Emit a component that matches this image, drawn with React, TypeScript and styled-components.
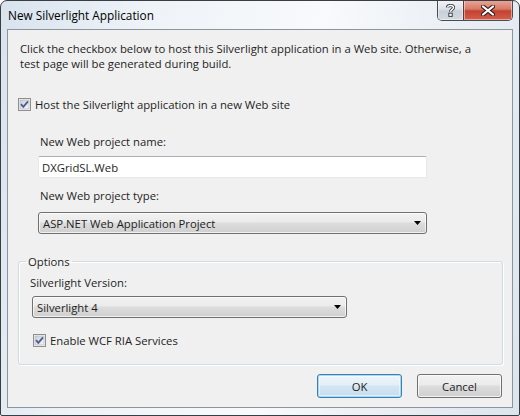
import React from "react"
import styled, { createGlobalStyle } from "styled-components"

const GlobalStyle = createGlobalStyle`
  html, body {
    margin: 0;
    padding: 0;
    background: #ffffff;
  }
  body {
    font-family: "Open Sans", "Liberation Sans", sans-serif;
    font-size: 11.3px;
    color: #1e1e1e;
  }
`

const Window = styled.div`
  width: 520px;
  height: 416px;
  box-sizing: border-box;
  display: flex;
  flex-direction: column;
  border: 1px solid #3a3d42;
  border-radius: 7px 7px 2px 2px;
  background: linear-gradient(100deg, #d8e3ee 0%, #eef3f8 25%, #f8fafc 55%, #e9eef4 80%, #dce5ee 100%);
  overflow: hidden;
`

const TitleBar = styled.div`
  height: 28px;
  display: flex;
  justify-content: space-between;
  align-items: flex-start;
`

const Title = styled.div`
  padding: 7px 0 0 7px;
  font-size: 11.8px;
  line-height: 15px;
  color: #000;
`

const Caption = styled.div`
  display: flex;
  margin-right: 6px;
  margin-top: -1px;
  border: 1px solid #474b52;
  border-top: none;
  border-radius: 0 0 5px 5px;
  overflow: hidden;
  height: 20px;
`

const CaptionButton = styled.div<{ $close?: boolean }>`
  width: ${(p) => (p.$close ? "48px" : "25px")};
  display: flex;
  align-items: center;
  justify-content: center;
  border-left: ${(p) => (p.$close ? "1px solid #5a3a38" : "none")};
  background: ${(p) =>
    p.$close
      ? "linear-gradient(#e9a99c 0%, #d87a68 45%, #c4412f 55%, #d2604c 100%)"
      : "linear-gradient(#f2f4f7 0%, #dde2e8 45%, #c9d0d8 55%, #d3d9e0 100%)"};
  box-shadow: inset 0 0 0 1px rgba(255, 255, 255, 0.45);
`

const Client = styled.div`
  flex: 1;
  margin: 0 6px 7px 6px;
  border: 1px solid #8d949c;
  background: #f0f0f0;
  display: flex;
  flex-direction: column;
  padding: 0 9px 0 10px;
`

const Intro = styled.p`
  margin: 11px 0 0 2px;
  max-width: 472px;
  line-height: 15px;
`

const CheckRow = styled.label<{ $top: number; $left?: number }>`
  display: flex;
  align-items: center;
  gap: 4px;
  height: 15px;
  margin-top: ${(p) => p.$top}px;
  margin-left: ${(p) => p.$left ?? 0}px;
`

const FieldLabel = styled.div<{ $top: number; $left: number }>`
  line-height: 15px;
  margin-top: ${(p) => p.$top}px;
  margin-left: ${(p) => p.$left}px;
`

const TextBox = styled.div`
  width: 389px;
  height: 22px;
  box-sizing: border-box;
  margin: 7px 0 0 20px;
  background: #fff;
  border: 1px solid #e3e9ef;
  border-top-color: #abadb3;
  border-radius: 2px;
  padding: 0 3px;
  display: flex;
  align-items: center;
`

const Combo = styled.div<{ $width: number; $top: number; $left: number }>`
  width: ${(p) => p.$width}px;
  height: 22px;
  box-sizing: border-box;
  margin-top: ${(p) => p.$top}px;
  margin-left: ${(p) => p.$left}px;
  border: 1px solid #707070;
  border-radius: 3px;
  background: linear-gradient(#f2f2f2 0%, #ebebeb 45%, #dddddd 50%, #cfcfcf 100%);
  box-shadow: inset 0 0 0 1px rgba(255, 255, 255, 0.7);
  display: flex;
  align-items: center;
  justify-content: space-between;
  padding: 0 5px 0 4px;
`

const Group = styled.fieldset`
  margin: 20px 0 0 0;
  padding: 0 0 15px 11px;
  min-width: 0;
  height: 111px;
  box-sizing: border-box;
  border: 1px solid #d0dbe3;
  border-radius: 3px;
  box-shadow: inset 1px 1px 0 #fff, 1px 1px 0 #fff;
`

const Legend = styled.legend`
  margin-left: -4px;
  padding: 0 2px;
  line-height: 15px;
`

const Footer = styled.div`
  display: flex;
  justify-content: flex-end;
  gap: 15px;
  margin-top: 9px;
  padding-right: 1px;
`

const Button = styled.button<{ $default?: boolean }>`
  width: 85px;
  height: 24px;
  box-sizing: border-box;
  font: inherit;
  color: #1e1e1e;
  border: 1px solid ${(p) => (p.$default ? "#3c7fb1" : "#707070")};
  border-radius: 3px;
  background: ${(p) =>
    p.$default
      ? "linear-gradient(#ecf4fa 0%, #e4eff7 45%, #d5e6f3 50%, #c4dcee 100%)"
      : "linear-gradient(#f2f2f2 0%, #ebebeb 45%, #dddddd 50%, #cfcfcf 100%)"};
  box-shadow: ${(p) =>
    p.$default ? "inset 0 0 0 1px #a5d8f6, inset 0 0 0 2px rgba(255,255,255,0.5)" : "inset 0 0 0 1px rgba(255,255,255,0.75)"};
  padding: 0;
`

function CheckMark() {
  return (
    <svg width="13" height="13" viewBox="0 0 13 13">
      <rect x="0.5" y="0.5" width="12" height="12" fill="#f4f4f4" stroke="#8e8f8f" />
      <defs>
        <linearGradient id="cbg" x1="0" y1="0" x2="1" y2="1">
          <stop offset="0" stopColor="#cbcfd5" />
          <stop offset="1" stopColor="#f6f6f6" />
        </linearGradient>
      </defs>
      <rect x="2" y="2" width="9" height="9" fill="url(#cbg)" stroke="#aeb3b9" strokeWidth="0.6" />
      <path d="M3 6.2 L5.3 8.8 L10 3.3" fill="none" stroke="#4a5f97" strokeWidth="1.8" />
    </svg>
  )
}

function Arrow() {
  return (
    <svg width="7" height="4" viewBox="0 0 7 4">
      <path d="M0 0 H7 L3.5 4 Z" fill="#000" />
    </svg>
  )
}

function CloseGlyph() {
  return (
    <svg width="14" height="11" viewBox="0 0 14 11">
      <path d="M2 1.5 L12 9.5 M12 1.5 L2 9.5" stroke="#3a2020" strokeWidth="4.2" strokeLinecap="round" />
      <path d="M2 1.5 L12 9.5 M12 1.5 L2 9.5" stroke="#ffffff" strokeWidth="2.2" strokeLinecap="round" />
    </svg>
  )
}

function HelpGlyph() {
  return (
    <svg width="9" height="13" viewBox="0 0 9 13">
      <path d="M1.5 3.6 C1.5 0.8 7.5 0.8 7.5 3.6 C7.5 5.6 4.5 5.6 4.5 7.8" fill="none" stroke="#3c4048" strokeWidth="3.2" />
      <path d="M1.5 3.6 C1.5 0.8 7.5 0.8 7.5 3.6 C7.5 5.6 4.5 5.6 4.5 7.8" fill="none" stroke="#ffffff" strokeWidth="1.4" />
      <rect x="2.8" y="9.2" width="3.4" height="3.2" fill="#ffffff" stroke="#3c4048" strokeWidth="1" />
    </svg>
  )
}

export default function App() {
  return (
    <>
      <GlobalStyle />
      <Window>
        <TitleBar>
          <Title>New Silverlight Application</Title>
          <Caption>
            <CaptionButton>
              <HelpGlyph />
            </CaptionButton>
            <CaptionButton $close>
              <CloseGlyph />
            </CaptionButton>
          </Caption>
        </TitleBar>
        <Client>
          <Intro>
            Click the checkbox below to host this Silverlight application in a Web site. Otherwise, a
            test page will be generated during build.
          </Intro>
          <CheckRow $top={26}>
            <CheckMark />
            Host the Silverlight application in a new Web site
          </CheckRow>
          <FieldLabel $top={22} $left={22}>New Web project name:</FieldLabel>
          <TextBox>DXGridSL.Web</TextBox>
          <FieldLabel $top={10} $left={22}>New Web project type:</FieldLabel>
          <Combo $width={389} $top={9} $left={20}>
            <span>ASP.NET Web Application Project</span>
            <Arrow />
          </Combo>
          <Group>
            <Legend>Options</Legend>
            <FieldLabel $top={6} $left={0}>Silverlight Version:</FieldLabel>
            <Combo $width={315} $top={6} $left={2}>
              <span>Silverlight 4</span>
              <Arrow />
            </Combo>
            <CheckRow $top={15} $left={3}>
              <CheckMark />
              Enable WCF RIA Services
            </CheckRow>
          </Group>
          <Footer>
            <Button $default>OK</Button>
            <Button>Cancel</Button>
          </Footer>
        </Client>
      </Window>
    </>
  )
}
